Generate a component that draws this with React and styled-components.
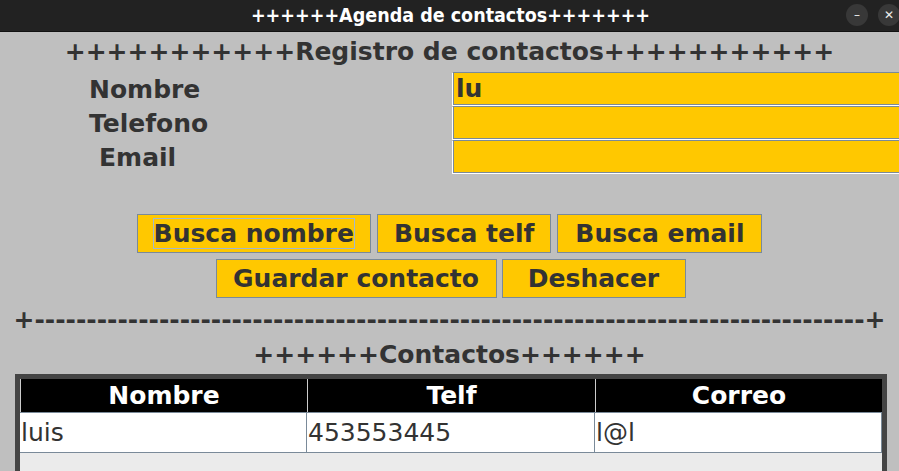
import React from 'react'
import styled, { createGlobalStyle } from 'styled-components'

const GlobalStyle = createGlobalStyle`
body {
  margin: 0;
  overflow: hidden;
  background: #bfbfbf;
}
`

const Window = styled.div`
width: 899px;
height: 471px;
display: flex;
flex-direction: column;
overflow: hidden;
font-family: "DejaVu Sans", sans-serif;
color: #333;
`

const TitleBar = styled.div`
position: relative;
height: 31px;
flex-shrink: 0;
background: #222;
border-bottom: 1px solid #111;
display: flex;
align-items: center;
justify-content: center;
`

const TitleText = styled.div`
font-family: "DejaVu Sans Condensed", "DejaVu Sans", sans-serif;
font-weight: bold;
font-size: 19.5px;
color: #fff;
padding-left: 2px;
`

const Controls = styled.div`
position: absolute;
right: -1px;
top: 4px;
display: flex;
gap: 10px;
`

const WinBtn = styled.div`
width: 22px;
height: 22px;
border-radius: 50%;
background: #383838;
color: #eee;
display: flex;
align-items: center;
justify-content: center;
font-family: "DejaVu Sans", sans-serif;
font-size: 12px;
`

const Content = styled.div`
flex: 1;
background: #bfbfbf;
display: flex;
flex-direction: column;
overflow: hidden;
`

const Heading = styled.div`
height: ${p => p.h}px;
line-height: ${p => p.h}px;
margin-top: ${p => p.mt || 0}px;
text-align: center;
font-size: 25px;
font-weight: bold;
white-space: nowrap;
color: #333;
`

const Form = styled.div`
display: grid;
grid-template-columns: 452px 460px;
grid-auto-rows: 34px;
`

const Label = styled.div`
display: flex;
align-items: center;
padding-left: ${p => p.indent}px;
font-size: 25px;
font-weight: bold;
`

const Field = styled.div`
height: 31px;
background: #ffc800;
border: 1px solid #7a8a99;
box-shadow: -1px 1px 0 #fff;
margin-left: 1px;
display: flex;
align-items: center;
padding-left: 2px;
font-size: 25px;
font-weight: bold;
color: #333;
`

const ButtonArea = styled.div`
margin-top: 40px;
display: flex;
flex-direction: column;
align-items: center;
gap: 6px;
`

const ButtonRow = styled.div`
display: flex;
justify-content: center;
gap: ${p => p.gap}px;
padding-left: ${p => p.shift || 0}px;
`

const Button = styled.div`
box-sizing: border-box;
height: 39px;
width: ${p => p.w ? p.w + 'px' : 'auto'};
padding: 0 16px;
border: 1px solid #7a8a99;
background: #ffc800;
display: flex;
align-items: center;
justify-content: center;
font-size: 25px;
font-weight: bold;
color: #333;
white-space: nowrap;
`

const Focus = styled.span`
border: 1px solid #a3b8cc;
margin: 0 -1px;
height: 29px;
line-height: 29px;
`

const Separator = styled.div`
margin-top: 7px;
height: 30px;
line-height: 30px;
text-align: center;
font-size: 25px;
font-weight: bold;
white-space: nowrap;
`

const TableFrame = styled.div`
margin: 4px 0 0 15px;
width: 862px;
flex: 1;
border: 5px solid #444;
border-bottom: none;
background: #ebebeb;
`

const Row = styled.div`
display: grid;
grid-template-columns: 287px 288px 1fr;
height: ${p => p.h}px;
background: ${p => p.head ? '#000' : '#fff'};
border-bottom: 1px solid #7a8a99;
`

const HeadCell = styled.div`
display: flex;
align-items: center;
justify-content: center;
color: #fff;
font-size: 25px;
font-weight: bold;
border-left: 1px solid #ccc;
`

const Cell = styled.div`
display: flex;
align-items: center;
padding-left: 1px;
font-size: 25px;
color: #333;
border-right: 1px solid #7a8a99;
`

const App = () => {
    return (
        <>
            <GlobalStyle />
            <Window>
                <TitleBar>
                    <TitleText>++++++Agenda de contactos+++++++</TitleText>
                    <Controls>
                        <WinBtn>–</WinBtn>
                        <WinBtn>✕</WinBtn>
                    </Controls>
                </TitleBar>
                <Content>
                    <Heading h={40}>+++++++++++Registro de contactos+++++++++++</Heading>
                    <Form>
                        <Label indent={89}>Nombre</Label>
                        <Field>lu</Field>
                        <Label indent={89}>Telefono</Label>
                        <Field></Field>
                        <Label indent={99}>Email</Label>
                        <Field></Field>
                    </Form>
                    <ButtonArea>
                        <ButtonRow gap={6}>
                            <Button><Focus>Busca nombre</Focus></Button>
                            <Button>Busca telf</Button>
                            <Button w={205}>Busca email</Button>
                        </ButtonRow>
                        <ButtonRow gap={5} shift={2}>
                            <Button w={281}>Guardar contacto</Button>
                            <Button w={184}>Deshacer</Button>
                        </ButtonRow>
                    </ButtonArea>
                    <Separator>+{'-'.repeat(80)}+</Separator>
                    <Heading h={30} mt={5}>++++++Contactos++++++</Heading>
                    <TableFrame>
                        <Row head h={33}>
                            <HeadCell>Nombre</HeadCell>
                            <HeadCell>Telf</HeadCell>
                            <HeadCell>Correo</HeadCell>
                        </Row>
                        <Row h={39}>
                            <Cell>luis</Cell>
                            <Cell>453553445</Cell>
                            <Cell>l@l</Cell>
                        </Row>
                    </TableFrame>
                </Content>
            </Window>
        </>
    )
}

export default App
